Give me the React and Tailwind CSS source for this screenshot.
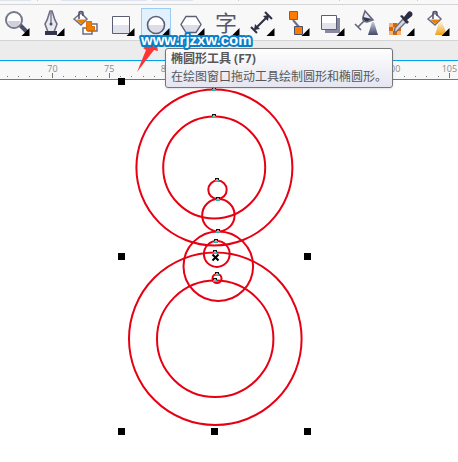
const ink = '#4c4f69'

function Corner() {
  return <path d="M28.500 20v8h-8z" fill="#000" />
}

function Bucket() {
  return (
    <g>
      <path d="M3 11l7-6 6 6-6 6z" fill="#fff" stroke="#6b6d82" strokeWidth="1.5" />
      <path d="M5 11.500h10l-5 4.500z" fill="#ef7d00" />
      <path d="M8 11V5c0-2 4-2 4 0v3" fill="none" stroke={ink} strokeWidth="1.5" />
    </g>
  )
}

const tools = [
  {
    name: 'Zoom',
    icon: (
      <>
        <path d="M19 17l7 7" stroke={ink} strokeWidth="4" />
        <circle cx="13" cy="12" r="8" fill="#fff" stroke="#77788b" strokeWidth="2" />
        <path d="M7 13h12a6 6 0 0 1-12 0z" fill="#cfd0dc" />
        <Corner />
      </>
    ),
  },
  {
    name: 'Pen',
    icon: (
      <>
        <path d="M14 3l-1 3c-1 4-2 7-4 10l3 8h6l3-8c-2-3-3-6-4-10l-1-3z" fill="#e8e8f0" stroke="#6b6d82" strokeWidth="1.5" />
        <path d="M15 4v11" stroke={ink} />
        <circle cx="15" cy="16" r="1.5" fill={ink} />
        <path d="M9 23h12v4H9z" fill="#34364c" />
        <Corner />
      </>
    ),
  },
  {
    name: 'Smart fill',
    icon: (
      <>
        <Bucket />
        <path d="M17 16h9v7h-9zM12 20h9v6h-9z" fill="#fff" stroke="#6b6d82" strokeWidth="1.5" />
        <path d="M15.500 13.500h5v5h3v4h-8z" fill="#f07d00" stroke="#d96b00" />
      </>
    ),
  },
  {
    name: 'Rectangle',
    icon: (
      <>
        <path d="M6.500 8.500h17v17h-17z" fill="#fff" />
        <path d="M7 17h16v8H7z" fill="#e2e2ec" />
        <path d="M6.500 8.500h17v17h-17z" fill="none" stroke="#5c5e74" />
        <Corner />
      </>
    ),
  },
  {
    name: 'Ellipse',
    active: true,
    icon: (
      <>
        <circle cx="15" cy="17" r="8.500" fill="#fff" />
        <path d="M7 17h16a8 8 0 0 1-16 0z" fill="#dcdde8" />
        <circle cx="15" cy="17" r="8.500" fill="none" stroke="#5c5e74" strokeWidth="1.600" />
        <Corner />
      </>
    ),
  },
  {
    name: 'Polygon',
    icon: (
      <>
        <path d="M10 8.500h10l5 8-5 8H10l-5-8z" fill="#fff" />
        <path d="M6 17h18l-4 7H10z" fill="#dcdde8" />
        <path d="M10 8.500h10l5 8-5 8H10l-5-8z" fill="none" stroke="#5c5e74" strokeWidth="1.400" />
        <Corner />
      </>
    ),
  },
  { name: 'Text', glyph: '字', icon: <Corner /> },
  {
    name: 'Dimension',
    icon: (
      <>
        <path d="M9 21L22 8M5 19l6 6M19 4l7 7" stroke="#2e3045" strokeWidth="2" />
        <path d="M8 22l1-6 5 5zM23 7l-6 1 5 5z" fill="#2e3045" />
        <Corner />
      </>
    ),
  },
  {
    name: 'Connector',
    icon: (
      <>
        <path d="M12 12l6 7" stroke="#6b6d82" strokeWidth="2" />
        <path d="M8.500 3.500h8v8h-8z" fill="#ff7a00" stroke="#c8480f" />
        <path d="M13.500 18.500h8v8h-8z" fill="#ff7a00" stroke={ink} />
        <Corner />
      </>
    ),
  },
  {
    name: 'Drop shadow',
    icon: (
      <>
        <path d="M9 10h15v15H9z" fill="#8789a0" />
        <path d="M5.500 7.500h15v14h-15z" fill="#fff" />
        <path d="M6 15h14v6H6z" fill="#e2e2ec" />
        <path d="M5.500 7.500h15v14h-15z" fill="none" stroke="#5c5e74" />
        <Corner />
      </>
    ),
  },
  {
    name: 'Transparency',
    icon: (
      <>
        <path d="M14 3l-2 6c-1 3 1 5 4 5l6-2z" fill="#e7e8f1" stroke="#63657b" strokeWidth="1.500" />
        <path d="M12 9l9 2-4 2c-3 1-5-1-5-4z" fill="#343a55" />
        <path d="M13 13l-6 6M4 16l6 6" stroke="#63657b" strokeWidth="1.600" />
        <path d="M21 14h2l4 13H17z" fill="url(#blueCone)" />
      </>
    ),
  },
  {
    name: 'Eyedropper',
    icon: (
      <>
        <path d="M3 15h12v12H3z" fill="#f7b070" />
        <path d="M7 15h4v4H7zM3 19h4v4H3zM11 19h4v4h-4zM7 23h4v4H7z" fill="#dd6500" />
        <path d="M17 11l3 3-9 9-3 2 1-5z" fill="#d5d6e0" stroke="#6b6d82" strokeWidth="1.400" />
        <path d="M14 8l2-1 2 2 4-5c2-2 6 1 4 4l-5 4 2 2-2 2z" fill="#2b2d42" />
        <Corner />
      </>
    ),
  },
  {
    name: 'Fill',
    icon: (
      <>
        <g transform="translate(4 0)">
          <Bucket />
        </g>
        <path d="M18 14h3l5 13H14z" fill="url(#goldCone)" />
        <Corner />
      </>
    ),
  },
]

const circles = [
  [214.4, 167.5, 78],
  [214.2, 167.5, 51],
  [217.5, 189.8, 9.2],
  [218.4, 215.2, 16.2],
  [218.3, 266.2, 34.8],
  [216.8, 254, 12.9],
  [217, 278.5, 4.5],
  [215.3, 338.8, 86.3],
  [215.2, 338.8, 58.2],
]

const handles = [[118, 78], [118, 253], [304, 253], [118, 428], [211, 428], [304, 428]]

const nodes = [[214, 89], [214, 116], [217, 180], [218, 199], [218, 231], [216, 241], [215, 252], [217, 274], [215, 280]]

const labels = [70, 75, 80, 100, 105]
const ticks = Array.from({ length: 41 }, (_, i) => ({ value: 66 + i, x: 52.5 + (i - 4) * 11.34 }))

function StatusRow() {
  return (
    <div className="flex h-1 items-start bg-[#f8f8f8]">
      <span className="h-px w-[31px] bg-[#e0e4ee]" />
      <span className="ml-1.5 h-px w-px bg-[#ccc]" />
      <span className="ml-[23px] h-px w-[86px] bg-[#e0e4ee]" />
      <span className="ml-[5px] h-px w-[41px] bg-[#e0e4ee]" />
      <span className="ml-[45px] h-px w-px bg-[#ccc]" />
      <span className="ml-[100px] h-px w-px bg-[#ccc]" />
      <span className="ml-[77px] h-px w-px bg-[#ccc]" />
    </div>
  )
}

function Toolbar() {
  return (
    <div className="flex gap-[5px] border-y border-[#d5d5d5] bg-[#f8f8f8] pt-[3px] pb-0.5 pl-px">
      {tools.map(t => (
        <button
          key={t.name}
          aria-label={t.name}
          className={`relative h-[30px] w-[30px] shrink-0 ${t.active ? 'bg-[#e2f1fd] outline outline-1 -outline-offset-1 outline-[#99cdf7]' : ''}`}
        >
          {t.glyph && (
            <span className="absolute inset-0 text-center text-[22px] leading-7 text-[#55566d]">{t.glyph}</span>
          )}
          <svg viewBox="0 0 30 30" className="absolute inset-0 h-full w-full" fill="none">
            {t.icon}
          </svg>
        </button>
      ))}
    </div>
  )
}

function Ruler() {
  return (
    <div className="h-5 overflow-hidden border-t border-b border-t-[#00a0f0] border-b-[#777] bg-[#f8f8f8]">
      <svg className="block h-[18px] w-full" shapeRendering="crispEdges">
        {ticks.map(t => (
          <path
            key={t.value}
            d={t.value % 5 === 0 ? `M${t.x} 12v5` : `M${t.x} 15v1`}
            stroke="#777"
            strokeWidth="1"
          />
        ))}
        {ticks.filter(t => labels.includes(t.value)).map(t => (
          <text key={t.value} x={t.x} y="11" textAnchor="middle" className="fill-[#888] font-['Open_Sans'] text-[9px]">
            {t.value}
          </text>
        ))}
      </svg>
    </div>
  )
}

function Drawing() {
  return (
    <svg viewBox="0 80 458 382" className="block w-full overflow-visible">
      <g fill="none" stroke="#e60012" strokeWidth="2">
        {circles.map(([cx, cy, r]) => <circle key={`${cx}-${r}`} cx={cx} cy={cy} r={r} />)}
      </g>
      {handles.map(([x, y]) => <rect key={`${x}-${y}`} x={x} y={y} width="7" height="7" />)}
      {nodes.map(([x, y]) => (
        <g key={`${x}-${y}`} shapeRendering="crispEdges">
          <rect x={x - 2} y={y - 2} width="4" height="3" fill="#111" />
          <rect x={x - 2} y={y} width="4" height="2" fill="#20b8b0" />
          <rect x={x - 1} y={y - 1} width="2" height="2" fill="#e78e90" />
        </g>
      ))}
      <path d="M212.500 254.500l6 6M218.500 254.500l-6 6" stroke="#000" strokeWidth="2" />
    </svg>
  )
}

function Tooltip() {
  return (
    <div
      role="tooltip"
      className="absolute top-12 left-[165px] rounded-[3px] border border-[#767676] bg-linear-to-b from-white to-[#e4e5f0] px-[5px] py-px text-[12px] leading-[18px] whitespace-nowrap text-[#575757] shadow-sm"
    >
      <p className="font-bold">椭圆形工具 (F7)</p>
      <p>在绘图窗口拖动工具绘制圆形和椭圆形。</p>
    </div>
  )
}

export default function App() {
  return (
    <div className="relative min-h-screen overflow-hidden bg-white font-['Open_Sans','Noto_Sans_CJK_SC',sans-serif]">
      <svg className="absolute h-0 w-0">
        <defs>
          <linearGradient id="blueCone" x2="0" y2="1">
            <stop stopColor="#c5c9da" />
            <stop offset="1" stopColor="#424968" />
          </linearGradient>
          <linearGradient id="goldCone" x2="0" y2="1">
            <stop stopColor="#fff1cc" />
            <stop offset="1" stopColor="#eda11c" />
          </linearGradient>
        </defs>
      </svg>
      <StatusRow />
      <Toolbar />
      <div className="h-[19px] bg-[#ececec]" />
      <Ruler />
      <Drawing />
      <svg viewBox="0 0 24 34" className="absolute top-10 left-[136px] h-[34px] w-6">
        <path d="M1 32L10 10l-3-2L20 0l2 11-4-1z" fill="#fb3535" />
      </svg>
      <Tooltip />
      <svg className="absolute top-7 left-[136px] h-6 w-32">
        <text
          x="5"
          y="17"
          className="fill-white stroke-[#087fc8] stroke-[4px] font-['Liberation_Sans'] text-[15px] font-bold [paint-order:stroke]"
          strokeLinejoin="round"
        >
          www.rjzxw.com
        </text>
      </svg>
    </div>
  )
}
